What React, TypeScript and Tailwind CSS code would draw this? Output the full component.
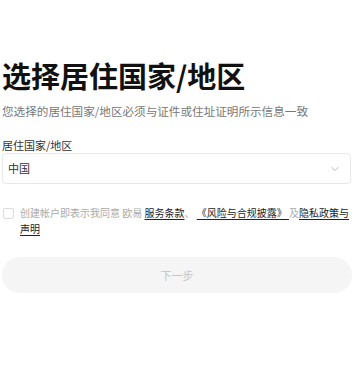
import React from "react";

const font = { fontFamily: '"Noto Sans CJK SC", "Noto Sans", sans-serif' };

const Chevron = () => (
  <svg width="10" height="10" viewBox="0 0 10 10" fill="none">
    <path d="M2 3.5 L5 6.5 L8 3.5" stroke="#b5b5b5" strokeWidth="1" strokeLinecap="round" strokeLinejoin="round" />
  </svg>
);

export default function App() {
  return (
    <div className="w-[355px] h-[375px] bg-white px-[2px] pt-[58px]" style={font}>
      <h1 className="text-[29px] leading-[34px] font-bold text-[#111]">选择居住国家/地区</h1>
      <p className="mt-[10px] text-[11.6px] leading-[18px] text-[#777]">
        您选择的居住国家/地区必须与证件或住址证明所示信息一致
      </p>

      <div className="mt-[18px]">
        <label className="block text-[11px] leading-[14px] text-[#333]">居住国家/地区</label>
        <div className="mt-[1px] mr-[2px] h-[31px] rounded-[4px] border border-[#e8e8e8] flex items-center justify-between pl-[5px] pr-[10px]">
          <span className="text-[11px] text-[#333]">中国</span>
          <Chevron />
        </div>
      </div>

      <div className="mt-[21px] flex items-start gap-[6px]">
        <span className="mt-[3px] ml-[1px] w-[11px] h-[11px] shrink-0 rounded-[2px] border border-[#dcdcdc]" />
        <p className="text-[10px] leading-[16px] text-[#aaa]">
          创建帐户即表示我同意 欧易{" "}
          <a className="text-[#222] underline underline-offset-2">服务条款</a>、{" "}
          <a className="text-[#222] underline underline-offset-2">《风险与合规披露》 </a>及
          <a className="text-[#222] underline underline-offset-2">隐私政策与声明</a>
        </p>
      </div>

      <button className="mt-[20px] w-[350px] h-[36px] rounded-full bg-[#f5f5f5] text-[11px] text-[#c4c4c4]">
        下一步
      </button>
    </div>
  );
}
